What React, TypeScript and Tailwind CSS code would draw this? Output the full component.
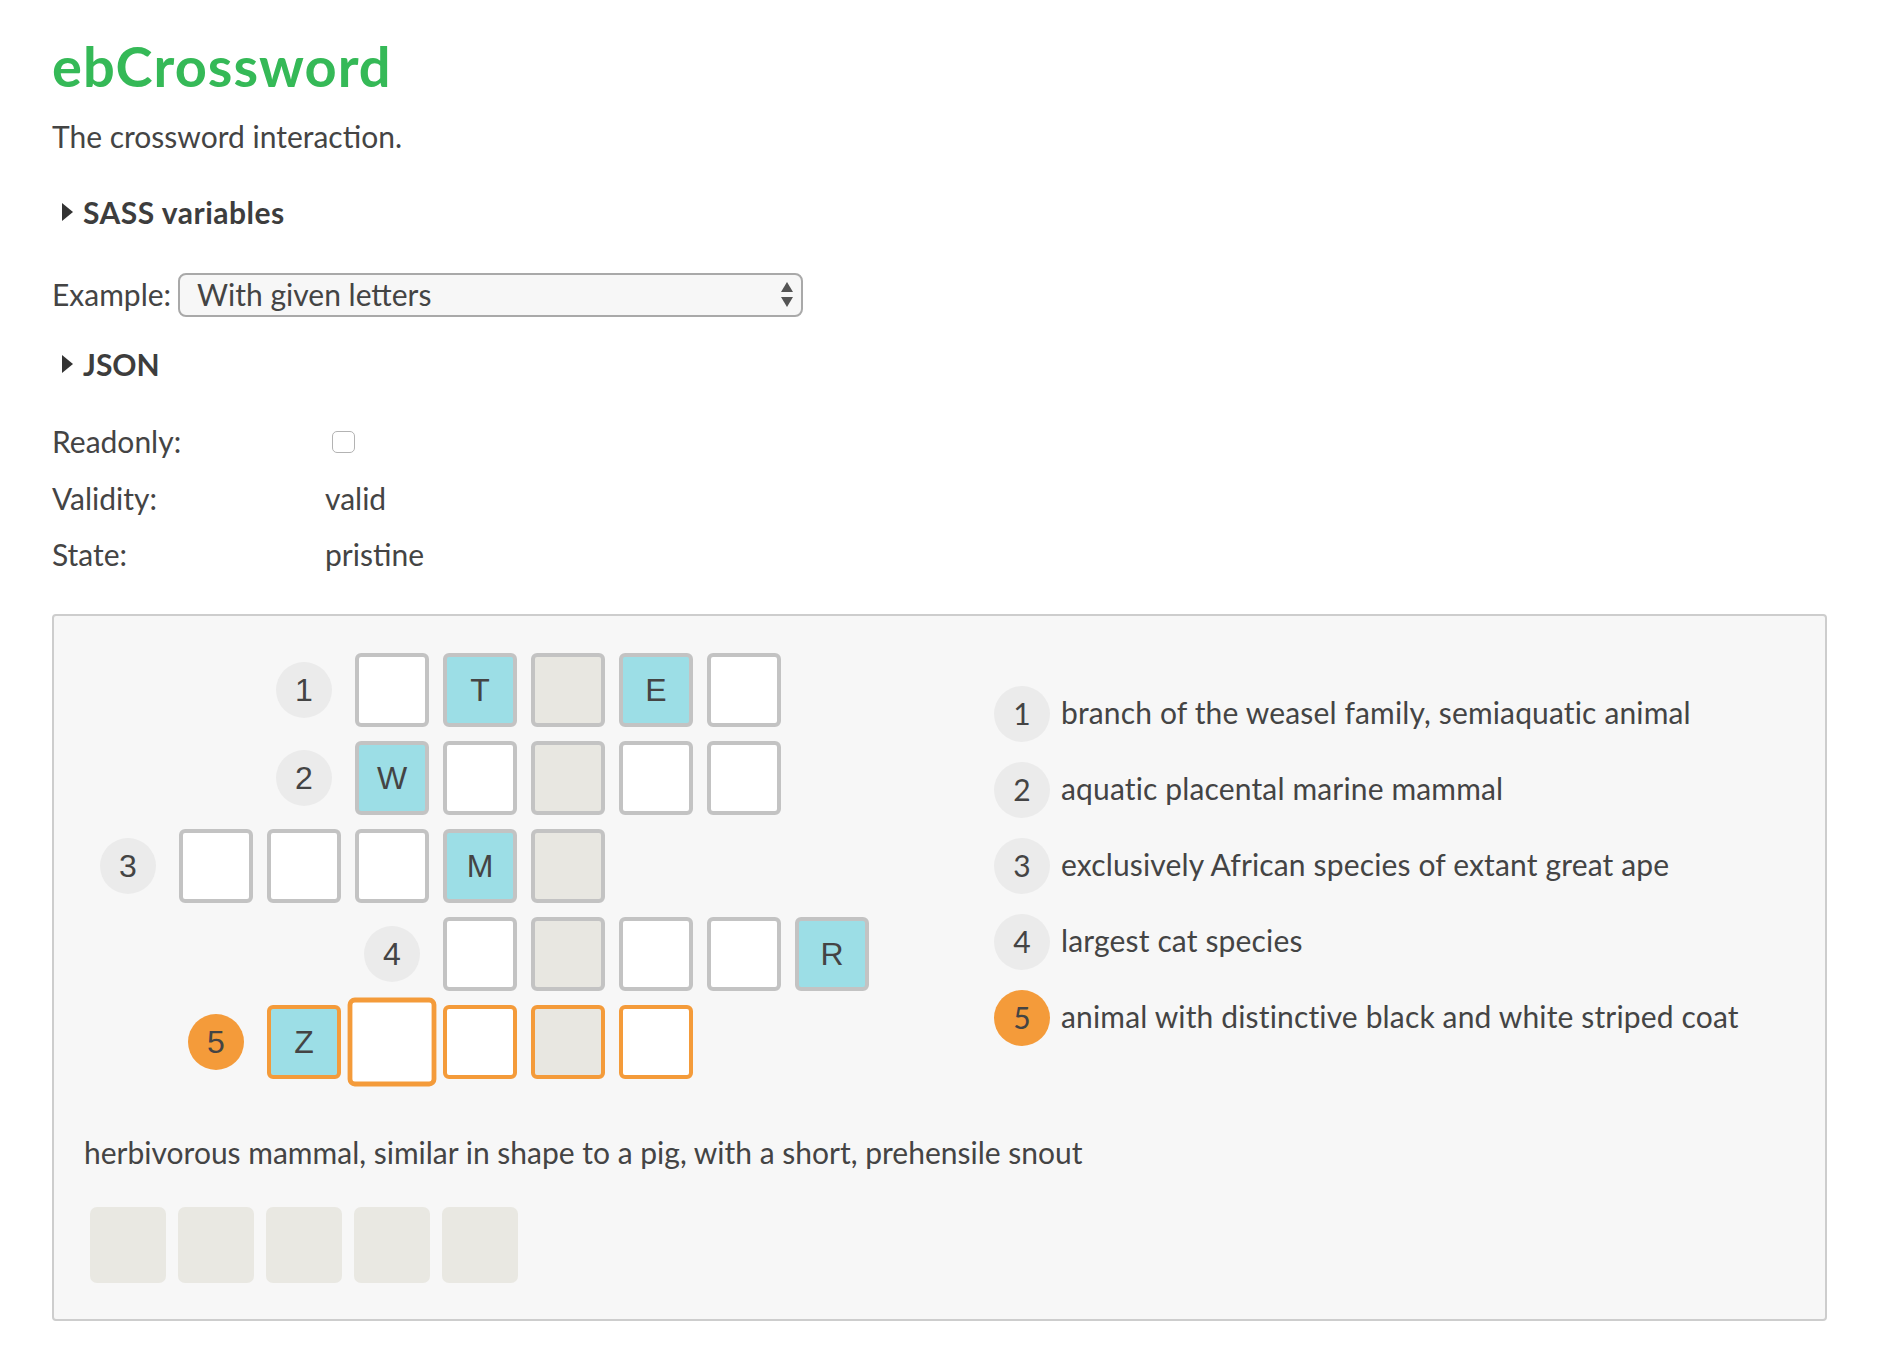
import React from "react";

type Kind = "white" | "blue" | "gray";
type Cell = { kind: Kind; letter?: string; focused?: boolean };
type Row = { badgeCol: string; cellCols: string[]; rowCls: string; active?: boolean; cells: Cell[] };

const W: Cell = { kind: "white" };
const G: Cell = { kind: "gray" };
const B = (l: string): Cell => ({ kind: "blue", letter: l });

const rows: Row[] = [
  {
    rowCls: "row-start-1",
    badgeCol: "col-start-3",
    cellCols: ["col-start-4", "col-start-5", "col-start-6", "col-start-7", "col-start-8"],
    cells: [W, B("T"), G, B("E"), W],
  },
  {
    rowCls: "row-start-2",
    badgeCol: "col-start-3",
    cellCols: ["col-start-4", "col-start-5", "col-start-6", "col-start-7", "col-start-8"],
    cells: [B("W"), W, G, W, W],
  },
  {
    rowCls: "row-start-3",
    badgeCol: "col-start-1",
    cellCols: ["col-start-2", "col-start-3", "col-start-4", "col-start-5", "col-start-6"],
    cells: [W, W, W, B("M"), G],
  },
  {
    rowCls: "row-start-4",
    badgeCol: "col-start-4",
    cellCols: ["col-start-5", "col-start-6", "col-start-7", "col-start-8", "col-start-9"],
    cells: [W, G, W, W, B("R")],
  },
  {
    rowCls: "row-start-5",
    badgeCol: "col-start-2",
    active: true,
    cellCols: ["col-start-3", "col-start-4", "col-start-5", "col-start-6", "col-start-7"],
    cells: [B("Z"), { kind: "white", focused: true }, W, G, W],
  },
];

const clues = [
  "branch of the weasel family, semiaquatic animal",
  "aquatic placental marine mammal",
  "exclusively African species of extant great ape",
  "largest cat species",
  "animal with distinctive black and white striped coat",
];

const bgFor: Record<Kind, string> = {
  white: "bg-white",
  blue: "bg-[#9cdee6]",
  gray: "bg-[#e8e7e1]",
};

function Triangle() {
  return (
    <svg width="11" height="18" viewBox="0 0 11 18" className="ml-[10px] shrink-0">
      <path d="M0 0 L11 9 L0 18 Z" fill="#333" />
    </svg>
  );
}

export default function App() {
  return (
    <div className="min-h-screen bg-white pl-[52px] pr-[55px] pt-[39px] pb-[49px] [font-family:Lato,sans-serif] text-[#444]">
      <h1 className="h-[54px] leading-[54px] text-[56px] tracking-[1px] font-bold text-[#35b957]">ebCrossword</h1>
      <p className="mt-[24px] h-[40px] pb-[2px] leading-[38px] text-[30px]">The crossword interaction.</p>

      <div className="mt-[36px] h-[40px] pb-[2px] flex items-center text-[30px] font-bold text-[#3d3d3d]">
        <Triangle />
        <span className="ml-[10px] leading-[38px] tracking-[0.5px]">SASS variables</span>
      </div>

      <div className="mt-[40px] h-[44px] flex items-center text-[30px]">
        <span className="leading-[40px] mb-[2px]">Example:</span>
        <div className="ml-[7px] w-[625px] h-[44px] border-2 border-[#a9a9a9] rounded-[8px] bg-[#f7f7f7] flex items-center pl-[17px] pr-[8px]">
          <span className="flex-1 leading-[36px] mb-[2px]">With given letters</span>
          <svg width="12" height="26" viewBox="0 0 12 26">
            <path d="M6 0 L12 10 L0 10 Z" fill="#555" />
            <path d="M0 15 L12 15 L6 25 Z" fill="#555" />
          </svg>
        </div>
      </div>

      <div className="mt-[28px] h-[40px] pb-[2px] flex items-center text-[30px] font-bold text-[#3d3d3d]">
        <Triangle />
        <span className="ml-[10px] leading-[38px]">JSON</span>
      </div>

      <div className="mt-[37px] h-[40px] flex items-center text-[30px]">
        <span className="w-[273px] leading-[38px] mb-[2px]">Readonly:</span>
        <span className="ml-[7px] w-[23px] h-[22px] rounded-[5px] border border-[#b3b3b3] bg-white" />
      </div>
      <div className="mt-[17px] h-[40px] pb-[2px] flex items-center text-[30px]">
        <span className="w-[273px] leading-[38px]">Validity:</span>
        <span className="leading-[38px]">valid</span>
      </div>
      <div className="mt-[16px] h-[40px] pb-[2px] flex items-center text-[30px]">
        <span className="w-[273px] leading-[38px]">State:</span>
        <span className="leading-[38px]">pristine</span>
      </div>

      <div className="mt-[39px] border-2 border-[#cdcdcd] rounded-[4px] bg-[#f7f7f7] p-[30px]">
        <div className="flex items-center">
          <div className="grid grid-cols-[repeat(9,88px)] grid-rows-[repeat(5,88px)] place-items-center shrink-0">
            {rows.map((r, ri) => (
              <React.Fragment key={ri}>
                <div
                  className={`${r.rowCls} ${r.badgeCol} w-[56px] h-[56px] rounded-full flex items-center justify-center text-[32px] [font-family:'Liberation_Sans',Arial,sans-serif] ${
                    r.active ? "bg-[#f49b3a]" : "bg-[#ebebeb]"
                  }`}
                >
                  {ri + 1}
                </div>
                {r.cells.map((c, ci) => (
                  <div
                    key={ci}
                    className={`${r.rowCls} ${r.cellCols[ci]} w-[74px] h-[74px] rounded-[6px] border-4 ${
                      r.active ? "border-[#f49b3a]" : "border-[#c3c3c3]"
                    } ${bgFor[c.kind]} ${c.focused ? "scale-[1.2]" : ""} flex items-center justify-center text-[32px] [font-family:'Liberation_Sans',Arial,sans-serif] text-[#444]`}
                  >
                    {c.letter}
                  </div>
                ))}
              </React.Fragment>
            ))}
          </div>

          <div className="ml-[118px] flex flex-col gap-[20px]">
            {clues.map((t, i) => (
              <div key={i} className="h-[56px] flex items-center text-[30px]">
                <div
                  className={`w-[56px] h-[56px] rounded-full flex items-center justify-center shrink-0 ${
                    i === 4 ? "bg-[#f49b3a]" : "bg-[#ebebeb]"
                  }`}
                >
                  <span className="mb-[2px] leading-[40px]">{i + 1}</span>
                </div>
                <span className="ml-[11px] leading-[48px] mb-[4px] tracking-[0.15px]">{t}</span>
              </div>
            ))}
          </div>
        </div>

        <p className="mt-[42px] h-[48px] leading-[48px] text-[30px]">
          herbivorous mammal, similar in shape to a pig, with a short, prehensile snout
        </p>

        <div className="mt-[25px] flex">
          {[0, 1, 2, 3, 4].map((i) => (
            <div key={i} className="w-[88px] h-[88px] flex items-center justify-center">
              <div className="w-[76px] h-[76px] rounded-[7px] bg-[#e9e8e2]" />
            </div>
          ))}
        </div>
      </div>
    </div>
  );
}
